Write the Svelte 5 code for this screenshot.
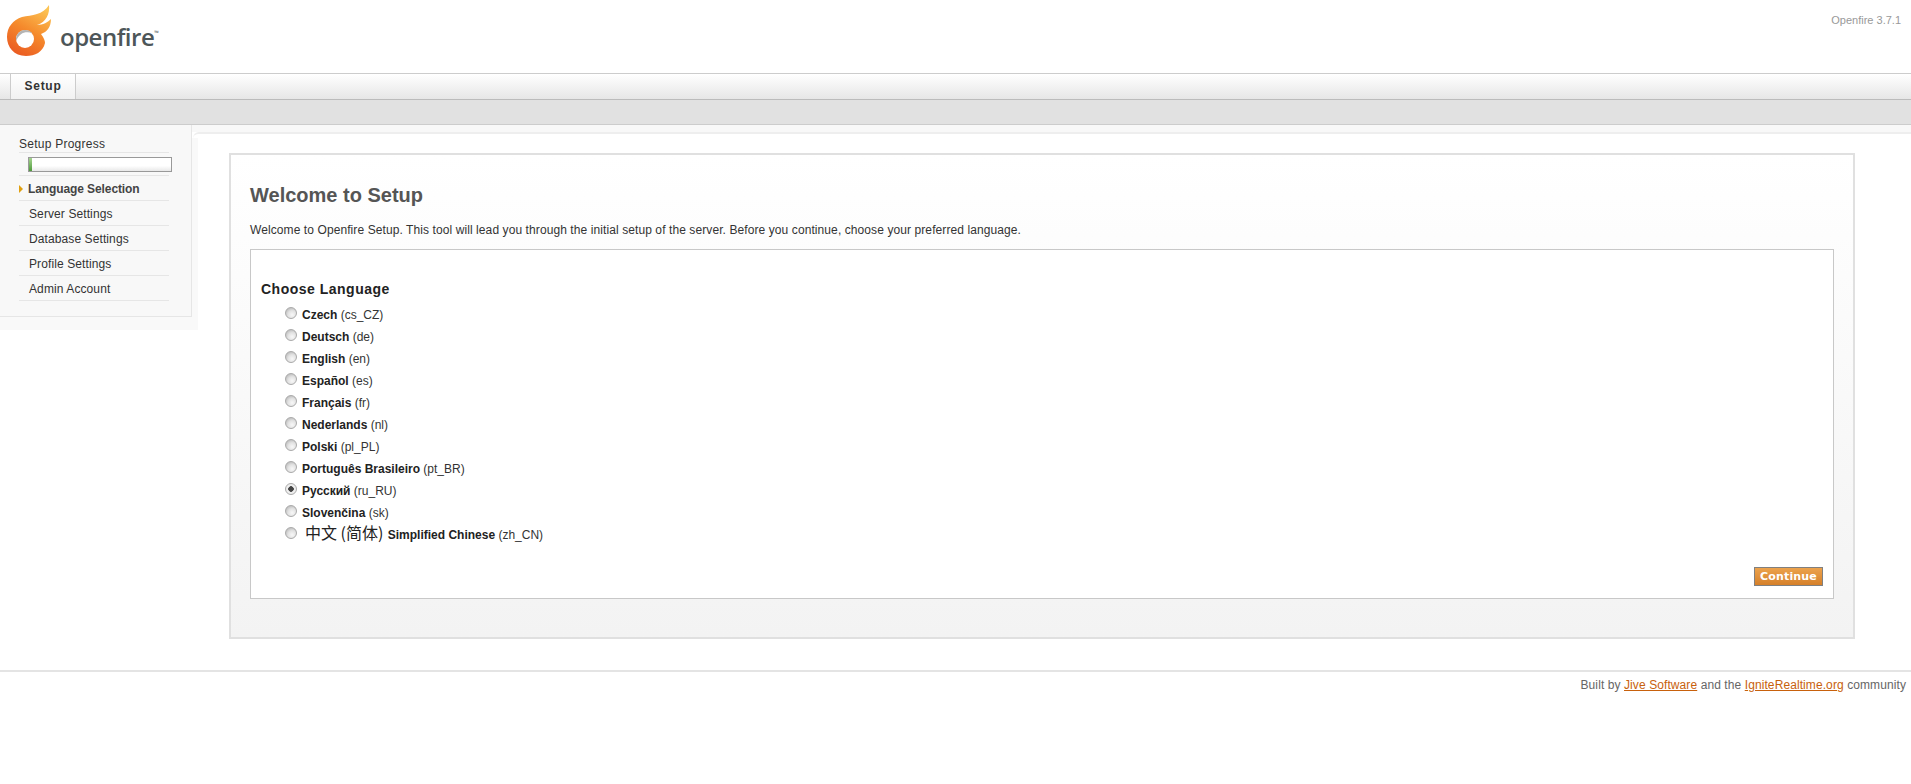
<script>
	const steps = ['Server Settings', 'Database Settings', 'Profile Settings', 'Admin Account'];
	const languages = [
		{ name: 'Czech', code: 'cs_CZ' },
		{ name: 'Deutsch', code: 'de' },
		{ name: 'English', code: 'en' },
		{ name: 'Español', code: 'es' },
		{ name: 'Français', code: 'fr' },
		{ name: 'Nederlands', code: 'nl' },
		{ name: 'Polski', code: 'pl_PL' },
		{ name: 'Português Brasileiro', code: 'pt_BR' },
		{ name: 'Русский', code: 'ru_RU' },
		{ name: 'Slovenčina', code: 'sk' },
		{ name: 'Simplified Chinese', code: 'zh_CN', native: '中文 (简体)' }
	];
	let selected = 'ru_RU';
</script>

<div class="page">
	<header class="header">
		<div class="logo">
			<svg width="54" height="60" viewBox="0 0 54 60">
				<defs>
					<linearGradient id="flame" x1="0.25" y1="1" x2="0.75" y2="0">
						<stop offset="0" stop-color="#ea5a22" />
						<stop offset="0.5" stop-color="#f58a2c" />
						<stop offset="1" stop-color="#fcc455" />
					</linearGradient>
				</defs>
				<path
					fill="url(#flame)"
					d="M26 56C14 56 7 47 7 37C7 27 13 20 22 17C32 15 43 15 49 5C50 14 46 22 37 25C43 25 48 22 51 19C51 27 47 32 41 34C44 38 45 41 45 43C43 52 35 56 26 56Z"
				/>
				<circle cx="25" cy="39" r="9" fill="#fff" />
				<path d="M16 41C15.500 34 20 30 25 30C28 30 30.500 31 32.500 33.500C29 31.800 24 32 21 34.200C18.500 36 17 38.500 16 41Z" fill="#b4b4b4" />
			</svg>
			<span class="wordmark">openfire<sup>™</sup></span>
		</div>
		<div class="version">Openfire 3.7.1</div>
	</header>

	<nav class="tabs">
		<div class="tab">Setup</div>
	</nav>
	<div class="subnav"></div>

	<div class="content">
		<aside class="sidebar">
			<div class="side-title">Setup Progress</div>
			<div class="progress-row">
				<div class="progress"><div class="progress-fill"></div></div>
			</div>
			<div class="step current">Language Selection</div>
			{#each steps as step}
				<div class="step">{step}</div>
			{/each}
		</aside>

		<main class="main">
			<div class="panel">
				<h1>Welcome to Setup</h1>
				<p class="intro">
					Welcome to Openfire Setup. This tool will lead you through the initial setup of the server. Before you continue, choose your preferred language.
				</p>
				<div class="box">
					<h2>Choose Language</h2>
					<div class="langs">
						{#each languages as lang}
							<label class="lang">
								<input type="radio" name="locale" value={lang.code} bind:group={selected} />
								<span>
									{#if lang.native}<span class="native">{lang.native}</span>{/if}
									<b>{lang.name}</b> ({lang.code})
								</span>
							</label>
						{/each}
					</div>
					<div class="actions">
						<button class="continue">Continue</button>
					</div>
				</div>
			</div>
			<footer class="footer">
				Built by <a href="#jive">Jive Software</a> and the <a href="#ignite">IgniteRealtime.org</a> community
			</footer>
		</main>
	</div>
</div>

<style>
	:global(body) {
		background: #fff;
	}
	.page {
		font-family: 'Liberation Sans', Arial, sans-serif;
		font-size: 12px;
		color: #333;
		height: 784px;
		overflow: hidden;
	}
	.header {
		height: 73px;
		display: flex;
		justify-content: space-between;
		border-bottom: 1px solid #ccc;
	}
	.logo {
		display: flex;
		align-items: flex-start;
		height: 60px;
	}
	.wordmark {
		font-family: 'Open Sans', sans-serif;
		font-size: 24px;
		font-weight: 600;
		color: #4d5659;
		margin-left: 6px;
		margin-top: 15px;
		line-height: 44px;
		letter-spacing: -0.5px;
	}
	.wordmark sup {
		font-size: 6px;
		vertical-align: 11px;
		line-height: 0;
		letter-spacing: 0;
	}
	.version {
		color: #999;
		font-size: 11px;
		padding: 14px 10px 0 0;
	}
	.tabs {
		height: 25px;
		background: linear-gradient(#fff, #e6e6e6);
		border-bottom: 1px solid #bbb;
		padding-left: 10px;
		display: flex;
	}
	.tab {
		width: 64px;
		border-left: 1px solid #ccc;
		border-right: 1px solid #ccc;
		background: linear-gradient(#fff, #f1f1f1);
		font-weight: bold;
		font-size: 12px;
		letter-spacing: 0.7px;
		color: #333;
		text-align: center;
		line-height: 24px;
	}
	.subnav {
		height: 24px;
		background: #e1e1e1;
		border-bottom: 1px solid #ccc;
	}
	.content {
		display: flex;
		align-items: flex-start;
		background: linear-gradient(#f8f8f8 7px, #fff 7px);
		padding-bottom: 40px;
	}
	.sidebar {
		position: relative;
		z-index: 1;
		width: 150px;
		height: 191px;
		flex: none;
		background: #f8f8f8;
		border-right: 1px solid #e6e6e6;
		border-bottom: 1px solid #e6e6e6;
		box-shadow: 6px 13px 0 #f9f9f9, 0 13px 0 #f9f9f9;
		padding: 0 22px 0 19px;
		letter-spacing: 0.1px;
	}
	.side-title {
		height: 27px;
		line-height: 39px;
		letter-spacing: 0.25px;
		border-bottom: 1px solid #e6e6e6;
	}
	.progress-row {
		height: 23px;
		border-bottom: 1px solid #e6e6e6;
		padding-top: 4px;
		box-sizing: border-box;
	}
	.progress {
		margin-left: 9px;
		width: 142px;
		height: 13px;
		border: 1px solid #999;
		background: linear-gradient(#fff 60%, #e8e8e8);
	}
	.progress-fill {
		width: 3px;
		height: 100%;
		background: linear-gradient(#a5d48f, #4f9a3c);
	}
	.step {
		height: 24px;
		line-height: 26px;
		padding-left: 10px;
		border-bottom: 1px solid #e6e6e6;
	}
	.step.current {
		font-weight: bold;
		letter-spacing: -0.1px;
		color: #444;
		padding-left: 9px;
		position: relative;
	}
	.step.current::before {
		content: '';
		position: absolute;
		left: 0;
		top: 9px;
		border-left: 4px solid #e0a010;
		border-top: 4px solid transparent;
		border-bottom: 4px solid transparent;
	}
	.main {
		flex: 1;
		min-width: 0;
		margin-top: 7px;
		margin-left: 1px;
		border-top: 2px solid #eee;
		border-top-left-radius: 6px;
		background: #fff;
		padding: 19px 0 0 36px;
	}
	.panel {
		width: 1626px;
		height: 486px;
		border: 2px solid #e0e0e0;
		background: linear-gradient(#fff, #f3f3f3);
		padding: 0 19px;
		box-sizing: border-box;
	}
	h1 {
		margin: 28px 0 0;
		font-size: 20px;
		line-height: 24px;
		color: #555;
	}
	.intro {
		margin: 16px 0 0;
		font-size: 12px;
		line-height: 14px;
		letter-spacing: 0.09px;
		color: #333;
	}
	.box {
		margin-top: 12px;
		width: 1584px;
		height: 350px;
		border: 1px solid #c8c8c8;
		background: #fff;
		padding: 0 10px;
		box-sizing: border-box;
		display: flex;
		flex-direction: column;
	}
	h2 {
		margin: 31px 0 0;
		font-size: 14px;
		line-height: 16px;
		letter-spacing: 0.5px;
		color: #222;
	}
	.langs {
		margin-top: 7px;
		padding-left: 23px;
		flex: 1;
	}
	.lang {
		display: flex;
		height: 22px;
		align-items: center;
		font-size: 12px;
		color: #333;
	}
	.lang b {
		color: #222;
	}
	.native {
		font-family: 'Noto Sans CJK SC', sans-serif;
		font-size: 16px;
		line-height: 0;
		margin: 0 1px 0 3px;
		color: #222;
	}
	input[type='radio'] {
		appearance: none;
		width: 10px;
		height: 10px;
		margin: -4px 5px 0 1px;
		border: 1px solid #aaa;
		border-radius: 50%;
		background: radial-gradient(circle at 62% 68%, #f8f8f8, #e2e2e2 45%, #a8a8a8);
		box-sizing: content-box;
	}
	input[type='radio']:checked {
		background: radial-gradient(circle, #444 0 2.5px, #eee 3px);
	}
	.actions {
		display: flex;
		justify-content: flex-end;
		padding-bottom: 12px;
	}
	.continue {
		width: 69px;
		height: 19px;
		padding: 0;
		border: 1px solid #808080;
		background: linear-gradient(#eca24c, #d5802a);
		color: #fff;
		font-family: 'DejaVu Sans', sans-serif;
		font-weight: bold;
		font-size: 11px;
		letter-spacing: 0.15px;
	}
	.footer {
		margin: 31px 0 0 -229px;
		padding: 6px 5px 0 0;
		border-top: 2px solid #e4e4e4;
		text-align: right;
		font-size: 12px;
		letter-spacing: 0.09px;
		color: #666;
	}
	.footer a {
		color: #c8610c;
	}
</style>
